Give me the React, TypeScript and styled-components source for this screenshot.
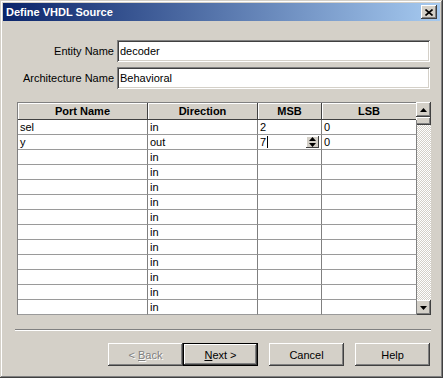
import React from 'react'
import styled, { createGlobalStyle } from 'styled-components'

const GlobalStyle = createGlobalStyle`
  html, body {
    margin: 0;
    padding: 0;
    background: #d4d0c8;
  }
  body {
    font-family: 'Liberation Sans', Arial, sans-serif;
    font-size: 11px;
    color: #000;
  }
  * {
    box-sizing: border-box;
  }
`

const ports = [
  { name: 'sel', dir: 'in', msb: '2', lsb: '0' },
  { name: 'y', dir: 'out', msb: '7', lsb: '0', editing: true },
  ...Array.from({ length: 11 }, () => ({ name: '', dir: 'in', msb: '', lsb: '' })),
]

const columns = ['Port Name', 'Direction', 'MSB', 'LSB']

function CloseIcon() {
  return (
    <svg width="8" height="7" viewBox="0 0 8 7">
      <path d="M0.5 0.5 L7.5 6.5 M7.5 0.5 L0.5 6.5" stroke="#000" strokeWidth="1.6" />
    </svg>
  )
}

function Arrow({ up }: { up?: boolean }) {
  return (
    <svg width="7" height="4" viewBox="0 0 7 4">
      <path d={up ? 'M3.5 0 L7 4 L0 4 Z' : 'M0 0 L7 0 L3.5 4 Z'} fill="#000" />
    </svg>
  )
}

export default function App() {
  return (
    <>
      <GlobalStyle />
      <Window>
        <TitleBar>
          <Title>Define VHDL Source</Title>
          <CloseButton>
            <CloseIcon />
          </CloseButton>
        </TitleBar>

        <Body>
          <Fields>
            <FieldRow>
              <FieldLabel>Entity Name</FieldLabel>
              <TextBox>decoder</TextBox>
            </FieldRow>
            <FieldRow>
              <FieldLabel>Architecture Name</FieldLabel>
              <TextBox>Behavioral</TextBox>
            </FieldRow>
          </Fields>

          <GridFrame>
            <Grid>
              {columns.map((c) => (
                <HeaderCell key={c}>{c}</HeaderCell>
              ))}
              {ports.map((p, i) => (
                <React.Fragment key={i}>
                  <Cell>{p.name}</Cell>
                  <Cell>{p.dir}</Cell>
                  <Cell>
                    {p.msb}
                    {p.editing && (
                      <>
                        <Caret />
                        <Spinner>
                          <Arrow up />
                          <Arrow />
                        </Spinner>
                      </>
                    )}
                  </Cell>
                  <Cell>{p.lsb}</Cell>
                </React.Fragment>
              ))}
            </Grid>
            <ScrollBar>
              <ScrollButton>
                <Arrow up />
              </ScrollButton>
              <Thumb />
              <Track />
              <ScrollButton>
                <Arrow />
              </ScrollButton>
            </ScrollBar>
          </GridFrame>

          <Separator />

          <Buttons>
            <WizardButton disabled>
              &lt; <u>B</u>ack
            </WizardButton>
            <WizardButton $default>
              <u>N</u>ext &gt;
            </WizardButton>
            <Spacer />
            <WizardButton>Cancel</WizardButton>
            <Spacer />
            <WizardButton>Help</WizardButton>
          </Buttons>
        </Body>
      </Window>
    </>
  )
}

const Window = styled.div`
  width: 443px;
  height: 378px;
  padding: 3px;
  background: #d4d0c8;
  display: flex;
  flex-direction: column;
  box-shadow: inset -1px -1px #404040, inset 1px 1px #d4d0c8, inset -2px -2px #808080, inset 2px 2px #fff;
`

const TitleBar = styled.div`
  height: 18px;
  display: flex;
  align-items: center;
  justify-content: space-between;
  padding: 0 3px 0 3px;
  background: linear-gradient(to right, #0a246a, #a6caf0);
`

const Title = styled.span`
  color: #fff;
  font-weight: bold;
  font-size: 11px;
`

const CloseButton = styled.div`
  width: 16px;
  height: 14px;
  display: flex;
  align-items: center;
  justify-content: center;
  background: #d4d0c8;
  box-shadow: inset -1px -1px #404040, inset 1px 1px #fff, inset -2px -2px #808080;
`

const Body = styled.div`
  flex: 1;
  display: flex;
  flex-direction: column;
  padding: 19px 9px 0 14px;
`

const Fields = styled.div`
  display: flex;
  flex-direction: column;
  gap: 5px;
`

const FieldRow = styled.div`
  display: flex;
  align-items: center;
  gap: 3px;
`

const FieldLabel = styled.label`
  width: 97px;
  text-align: right;
`

const TextBox = styled.div`
  width: 313px;
  height: 22px;
  padding: 3px 3px;
  background: #fff;
  line-height: 16px;
  box-shadow: inset 1px 1px #808080, inset -1px -1px #fff, inset 2px 2px #404040, inset -2px -2px #d4d0c8;
`

const GridFrame = styled.div`
  margin-top: 13px;
  display: flex;
  height: 213px;
`

const Grid = styled.div`
  width: 399px;
  display: grid;
  grid-template-columns: 130px 110px 64px 95px;
  grid-auto-rows: 15px;
  grid-template-rows: 17px;
  align-content: start;
  border-left: 1px solid #808080;
  border-top: 1px solid #808080;
  background: #fff;
`

const HeaderCell = styled.div`
  background: #d4d0c8;
  font-weight: bold;
  text-align: center;
  line-height: 16px;
  border-right: 1px solid #404040;
  border-bottom: 1px solid #404040;
  box-shadow: inset 1px 1px #fff;
`

const Cell = styled.div`
  position: relative;
  padding-left: 2px;
  line-height: 14px;
  white-space: nowrap;
  border-right: 1px solid #808080;
  border-bottom: 1px solid #9a9a9a;
  display: flex;
  align-items: center;
`

const Caret = styled.span`
  width: 1px;
  height: 12px;
  margin-left: 1px;
  background: #000;
`

const Spinner = styled.div`
  position: absolute;
  right: 2px;
  top: 1px;
  width: 13px;
  height: 12px;
  display: flex;
  flex-direction: column;
  align-items: center;
  justify-content: space-around;
  background: #d4d0c8;
  box-shadow: inset -1px -1px #404040, inset 1px 1px #fff;
`

const ScrollBar = styled.div`
  width: 15px;
  display: flex;
  flex-direction: column;
`

const ScrollButton = styled.div`
  height: 15px;
  display: flex;
  align-items: center;
  justify-content: center;
  background: #d4d0c8;
  box-shadow: inset -1px -1px #404040, inset 1px 1px #fff, inset -2px -2px #808080;
`

const Thumb = styled.div`
  height: 8px;
  background: #d4d0c8;
  box-shadow: inset -1px -1px #404040, inset 1px 1px #fff, inset -2px -2px #808080;
`

const Track = styled.div`
  flex: 1;
  background: repeating-conic-gradient(#fff 0 25%, #d4d0c8 0 50%) 0 0 / 2px 2px;
`

const Separator = styled.div`
  margin: 14px 0 0 -2px;
  height: 2px;
  border-top: 1px solid #808080;
  border-bottom: 1px solid #fff;
`

const Buttons = styled.div`
  margin-top: 12px;
  display: flex;
  justify-content: flex-end;
  padding-right: 1px;
`

const Spacer = styled.div`
  width: 11px;
`

const WizardButton = styled.button<{ $default?: boolean }>`
  width: 75px;
  height: 23px;
  padding: 0;
  font-family: 'Liberation Sans', Arial, sans-serif;
  font-size: 11px;
  color: #000;
  border: ${(p) => (p.$default ? '1px solid #000' : 'none')};
  background: #d4d0c8;
  box-shadow: inset -1px -1px #404040, inset 1px 1px #fff, inset -2px -2px #808080;

  &:disabled {
    color: #808080;
    text-shadow: 1px 1px #fff;
  }
`
